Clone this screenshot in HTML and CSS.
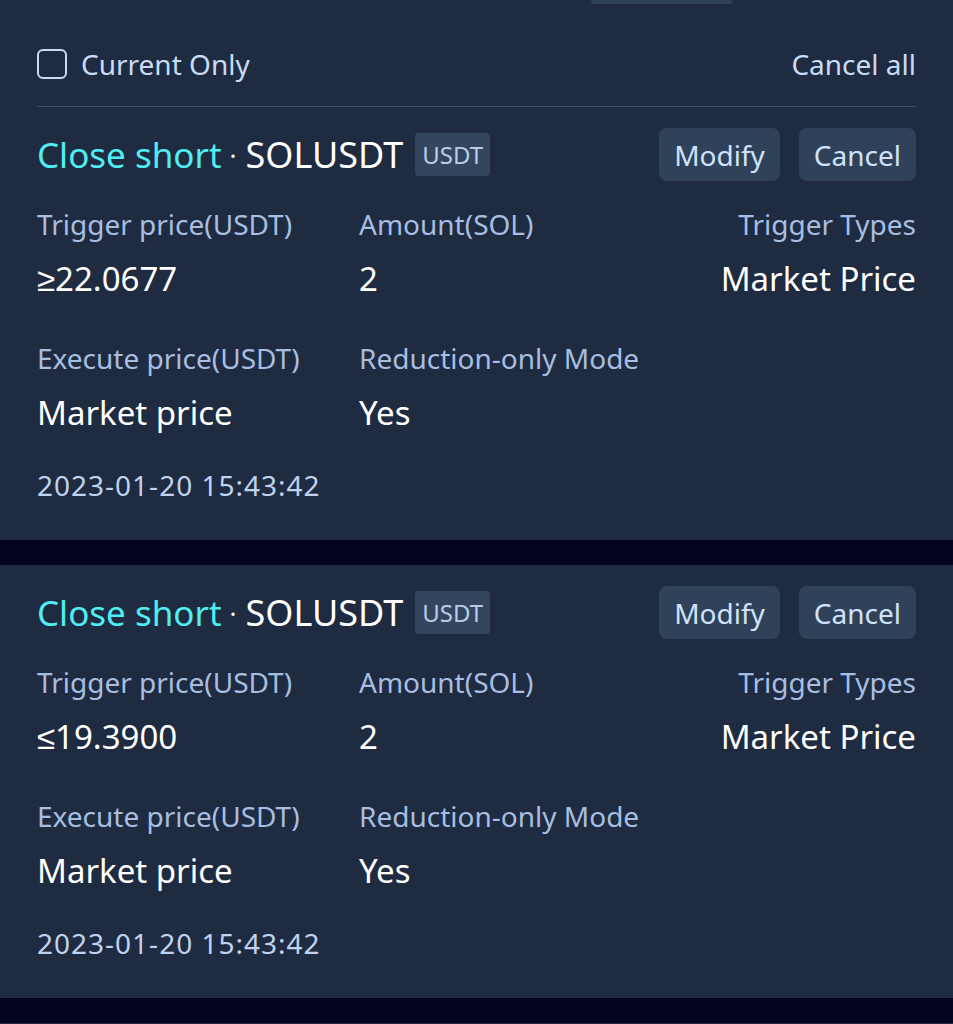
FILE: index.html
```html
<!DOCTYPE html>
<html lang="en">
<head>
    <meta charset="UTF-8">
    <meta name="viewport" content="width=device-width, initial-scale=1.0">
    <title>Plan Orders</title>
    <link rel="stylesheet" href="styles.css">
</head>
<body>
    <div class="page">
        <section class="panel">
            <div class="tab-stub"></div>
            <div class="filter">
                <label class="check">
                    <span class="box"></span>
                    <span>Current Only</span>
                </label>
                <a class="cancel-all">Cancel all</a>
            </div>
            <div class="divider"></div>

            <article class="order">
                <div class="order-head">
                    <div class="title">
                        <span class="side">Close short</span>
                        <span class="dot">·</span>
                        <span class="symbol">SOLUSDT</span>
                        <span class="badge">USDT</span>
                    </div>
                    <div class="actions">
                        <button class="btn">Modify</button>
                        <button class="btn">Cancel</button>
                    </div>
                </div>
                <div class="fields">
                    <div class="field">
                        <div class="label">Trigger price(USDT)</div>
                        <div class="value">≥22.0677</div>
                    </div>
                    <div class="field">
                        <div class="label">Amount(SOL)</div>
                        <div class="value">2</div>
                    </div>
                    <div class="field right">
                        <div class="label">Trigger Types</div>
                        <div class="value">Market Price</div>
                    </div>
                    <div class="field">
                        <div class="label">Execute price(USDT)</div>
                        <div class="value">Market price</div>
                    </div>
                    <div class="field">
                        <div class="label">Reduction-only Mode</div>
                        <div class="value">Yes</div>
                    </div>
                </div>
                <div class="time">2023-01-20 15:43:42</div>
            </article>
        </section>

        <section class="panel">
            <article class="order">
                <div class="order-head">
                    <div class="title">
                        <span class="side">Close short</span>
                        <span class="dot">·</span>
                        <span class="symbol">SOLUSDT</span>
                        <span class="badge">USDT</span>
                    </div>
                    <div class="actions">
                        <button class="btn">Modify</button>
                        <button class="btn">Cancel</button>
                    </div>
                </div>
                <div class="fields">
                    <div class="field">
                        <div class="label">Trigger price(USDT)</div>
                        <div class="value">≤19.3900</div>
                    </div>
                    <div class="field">
                        <div class="label">Amount(SOL)</div>
                        <div class="value">2</div>
                    </div>
                    <div class="field right">
                        <div class="label">Trigger Types</div>
                        <div class="value">Market Price</div>
                    </div>
                    <div class="field">
                        <div class="label">Execute price(USDT)</div>
                        <div class="value">Market price</div>
                    </div>
                    <div class="field">
                        <div class="label">Reduction-only Mode</div>
                        <div class="value">Yes</div>
                    </div>
                </div>
                <div class="time">2023-01-20 15:43:42</div>
            </article>
        </section>

        <section class="panel"></section>
    </div>
</body>
</html>
```

FILE: styles.css
```css
body {
    margin: 0;
    font-family: "Noto Sans", Arial, sans-serif;
    background-color: #03051f;
    color: #fff;
    overflow: hidden;
}

.page {
    display: flex;
    flex-direction: column;
    gap: 25px;
}

.panel {
    background-color: #1f2b40;
    padding: 0 37px;
    min-height: 10px;
}

/* bottom edge of the tab bar above */
.tab-stub {
    width: 142px;
    height: 4px;
    margin-left: 554px;
    background-color: #2f4158;
    border-radius: 0 0 6px 6px;
}

.filter {
    display: flex;
    justify-content: space-between;
    align-items: center;
    height: 40px;
    margin-top: 40px;
    margin-bottom: 22px;
    font-size: 28px;
    color: #c8dcf7;
}

.check {
    display: flex;
    align-items: center;
    gap: 14px;
}

.box {
    width: 26px;
    height: 26px;
    border: 2px solid #c8dcf7;
    border-radius: 6px;
    box-sizing: content-box;
}

.divider {
    height: 1px;
    background-color: #3c5264;
}

.order {
    padding: 21px 0 37px;
}

.order-head {
    display: flex;
    justify-content: space-between;
    align-items: center;
    height: 53px;
}

.title {
    display: flex;
    align-items: center;
    font-size: 35px;
}

.side {
    color: #50eef3;
}

.symbol {
    font-size: 36px;
}

.dot {
    margin: 0 9px 0 8px;
    color: #fff;
    font-size: 26px;
}

.badge {
    margin-left: 12px;
    padding: 0 7px;
    height: 43px;
    line-height: 43px;
    font-size: 24px;
    color: #b8cce8;
    background-color: #34465d;
    border-radius: 4px;
}

.actions {
    display: flex;
    gap: 19px;
}

.btn {
    height: 53px;
    padding: 0 15px;
    font-family: inherit;
    font-size: 28px;
    color: #d0e2fb;
    background-color: #2f4259;
    border: none;
    border-radius: 8px;
}

.fields {
    display: grid;
    grid-template-columns: 322px 1fr auto;
    row-gap: 43px;
    margin-top: 25px;
}

.field.right {
    text-align: right;
}

.label {
    font-size: 28px;
    line-height: 36px;
    color: #a7bee0;
}

.value {
    margin-top: 19px;
    font-size: 33px;
    line-height: 36px;
    color: #fff;
}

.time {
    margin-top: 36px;
    font-size: 28px;
    line-height: 36px;
    letter-spacing: 1px;
    color: #bfd3ef;
}
```
